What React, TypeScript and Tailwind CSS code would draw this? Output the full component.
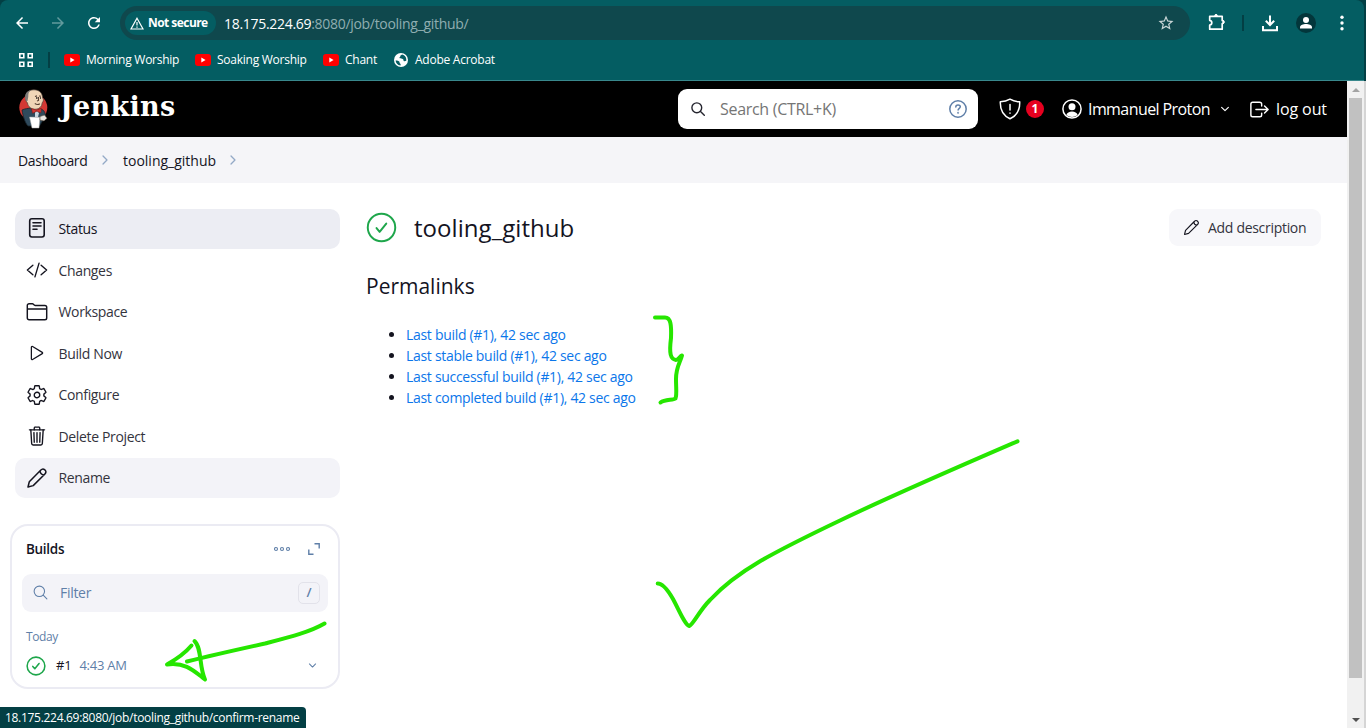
import React from "react";
import {
  IoCodeSlashOutline,
  IoSettingsOutline,
  IoTrashOutline,
  IoPlayOutline,
  IoLogOutOutline,
  IoSearchOutline,
  IoChevronDown,
  IoChevronForward,
} from "react-icons/io5";
import { MdArrowBack, MdArrowForward, MdRefresh, MdStarOutline } from "react-icons/md";

function YouTube() {
  return (
    <svg width="16" height="12" viewBox="0 0 16 12" className="shrink-0">
      <rect width="16" height="12" rx="3" fill="#f00" />
      <path d="M6.300 3.600v4.800L10.600 6z" fill="#fff" />
    </svg>
  );
}

function Globe() {
  return (
    <svg width="14" height="14" viewBox="0 0 14 14" className="shrink-0">
      <circle cx="7" cy="7" r="7" fill="#fff" />
      <path d="M1.600 7.400c2 .2 2.500 0 3.600 1.100.9.9-.2 1.400.9 2 .8.500.6 1.600.4 2.100C3.600 12 1.700 10 1.600 7.400zM8 1.600c-.7.7-1.800.8-1.700 1.700.1 1-1.300.9-.8 1.700.8 1 2.600.2 3.600 1.300.9 1-.1 1.700 1.100 1.900.8.1 1.300-.5 2.100-.5C12.600 4.200 10.700 2.100 8 1.600z" fill="#045d62" />
    </svg>
  );
}

function Butler() {
  return (
    <svg width="30" height="40" viewBox="0 0 30 40" className="shrink-0">
      <ellipse cx="14.300" cy="18.500" rx="14" ry="13.500" fill="#d33833" />
      <path d="M3 21c3-1.500 6-1.500 8.500-2l4 4 6-3c3 .5 5 3 5 8l-3 4-3 5H9c-3-3-5-10-6-16z" fill="#2f4a5c" stroke="#17232b" strokeWidth=".8" />
      <path d="M7 12C5 5 9 .7 15 .8c6 0 8.500 4 8.600 8 1.500 2 .5 4-.4 5-.2 4-3.200 6.200-6.200 6.400C12 20.500 9 17.500 8.500 14z" fill="#f0d6b7" stroke="#4c4038" strokeWidth=".7" />
      <path d="M7 12C4.600 5.500 8 1.500 12 1.200 9 3 9.500 5.500 9.300 7.500L8.500 12z" fill="#7d7a78" />
      <path d="M16 7.500l2-.6M20 7l2 .2M19.500 8v3.500l-1.500.6M15.800 14.500c2 1.300 3.700 1.100 5 .2" stroke="#5a4335" strokeWidth="1.100" fill="none" />
      <path d="M17 9h1.500M21 9h1" stroke="#222" strokeWidth="1.300" />
      <path d="M12.500 19.500l5 1.800 4.700-2-.2 4.400-4.500-1.200-4 1.800z" fill="#d33833" stroke="#7b1714" strokeWidth=".5" />
      <path d="M16 23.500l2-1 2 1.500-1 4h-3z" fill="#c9d6e0" />
      <path d="M10.500 28l10.500.3-1 10.700h-7z" fill="#fff" stroke="#aaa" strokeWidth=".5" />
      <path d="M21 27.500l4.500-1.500 2.500 3.300-3 2.600-4-.8z" fill="#e9e6e2" stroke="#60503f" strokeWidth=".6" />
    </svg>
  );
}

function StatusIcon() {
  return (
    <svg width="22" height="22" viewBox="0 0 22 22" fill="none" stroke="currentColor" strokeWidth="1.600" strokeLinecap="round" className="-mt-[2px] shrink-0">
      <rect x="3.700" y="1.800" width="14.500" height="18.200" rx="2.200" />
      <path d="M7 5.800h8M7 9h8M7 12.200h4" />
    </svg>
  );
}

function FolderIcon() {
  return (
    <svg width="22" height="22" viewBox="0 0 22 22" fill="none" stroke="currentColor" strokeWidth="1.450" strokeLinejoin="round" className="shrink-0">
      <path d="M1.300 8V4.600c0-1 .8-1.800 1.800-1.800h3.400c.9 0 1.400 1.600 2.600 1.600h9.800c1 0 1.800.8 1.800 1.800V17c0 1-.8 1.800-1.800 1.800H3.100c-1 0-1.800-.8-1.800-1.800V8h19.400" />
    </svg>
  );
}

function Pencil({ size }: { size: number }) {
  return (
    <svg width={size} height={size} viewBox="0 0 22 22" fill="none" stroke="currentColor" strokeWidth="1.500" strokeLinejoin="round" className="shrink-0">
      <path d="M2 20l1.300-5.300L14.600 3.200c1.200-1.200 2.700-1.700 3.900-.6l.7.700c1.200 1.200.7 2.700-.5 3.900L7.200 18.600zM14 3.800c.2 2.200 2 4.100 4.200 4.200" />
    </svg>
  );
}

function CheckCircle({ size, stroke }: { size: number; stroke: number }) {
  return (
    <svg width={size} height={size} viewBox="0 0 30 30" fill="none" stroke="#1ea64b" strokeWidth={stroke} strokeLinecap="round" strokeLinejoin="round" className="shrink-0">
      <circle cx="15" cy="15" r="13.300" />
      <path d="M10.200 15.600l3 3.600 6.400-8" />
    </svg>
  );
}

function BrowserChrome() {
  return (
    <header className="relative h-[81px] w-[1364px] rounded-t-lg border-b border-[#39888c] bg-[#045d62] font-['Open_Sans',sans-serif] text-white">
      <div className="flex h-[46px] items-center">
        <div className="flex w-[120px] shrink-0 items-center pl-[13px]">
          <MdArrowBack className="size-[18px]" />
          <MdArrowForward className="ml-[18px] size-[18px] text-[#629a9d]" />
          <MdRefresh className="ml-[18px] size-[18px]" />
        </div>
        <div className="flex h-[34px] w-[1070px] shrink-0 items-center rounded-full bg-[#0f484d] pr-[15px] pl-[5px]">
          <div className="flex h-6 w-[91px] items-center rounded-full bg-[#045d62] pl-[5px]">
            <svg width="14" height="13" viewBox="0 0 14 13" fill="none" stroke="#fff" strokeWidth="1.200" className="mr-[4px] shrink-0">
              <path d="M7 1.300L13 12H1zM7 5v3.500M7 9.500v1.200" />
            </svg>
            <span className="text-[12px] font-bold tracking-[-0.55px] whitespace-nowrap">Not secure</span>
          </div>
          <span className="ml-[8px] text-[14px] tracking-[-0.3px] whitespace-nowrap">
            18.175.224.69<span className="text-[#8faeb1]">:8080/job/tooling_github/</span>
          </span>
          <MdStarOutline className="ml-auto size-[18px] text-[#c9d6d7]" />
        </div>
        <svg width="20" height="20" viewBox="0 0 20 20" fill="none" stroke="#fff" strokeWidth="1.700" strokeLinejoin="round" className="-mt-[2px] ml-[17px] shrink-0">
          <path d="M2.700 4.300h12.500v4.200c2 0 2 3.200 0 3.200v5.500H2.700v-4c2.800-.6 2.800-4.200 0-4.800z" />
          <path d="M7.700 3.600c0-1.600 2.700-1.600 2.700 0zM16 8.700c1.600 0 1.600 2.700 0 2.700z" fill="#fff" strokeWidth="1" />
        </svg>
        <div className="ml-[15px] h-4 w-[2px] bg-[#033f44]" />
        <svg width="18" height="18" viewBox="0 0 18 18" fill="none" stroke="#fff" strokeWidth="2" className="ml-[17px] shrink-0">
          <path d="M9 1.500v9M4.800 6.800L9 11l4.200-4.200M2 12v4.200h14V12" />
        </svg>
        <svg width="20" height="20" viewBox="0 0 20 20" className="ml-[17px] shrink-0">
          <circle cx="10" cy="10" r="10" fill="#03363b" />
          <circle cx="10" cy="7" r="3" fill="#fff" />
          <path d="M4 15.600v-1.400c0-2 3.400-3.100 6-3.100s6 1.100 6 3.100v1.400z" fill="#fff" />
        </svg>
        <svg width="4" height="16" viewBox="0 0 4 16" fill="#fff" className="ml-[24px] shrink-0">
          <circle cx="2" cy="2.300" r="1.700" />
          <circle cx="2" cy="8" r="1.700" />
          <circle cx="2" cy="13.700" r="1.700" />
        </svg>
      </div>
      <nav className="flex h-[28px] items-center text-[12px] tracking-[-0.25px] whitespace-nowrap">
        <svg width="14" height="14" viewBox="0 0 14 14" fill="none" stroke="#fff" strokeWidth="1.600" className="ml-[19px] shrink-0">
          <path d="M.8.8h4v4h-4zM9.200.8h4v4h-4zM.8 9.200h4v4h-4zM9.200 9.200h4v4h-4z" />
        </svg>
        <div className="ml-[15px] h-4 w-[2px] bg-[#033f44]" />
        <div className="ml-[14px] flex w-[131px] items-center gap-[6px]"><YouTube />Morning Worship</div>
        <div className="flex w-[128px] items-center gap-[6px]"><YouTube />Soaking Worship</div>
        <div className="flex w-[71px] items-center gap-[6px]"><YouTube />Chant</div>
        <div className="flex items-center gap-[7px]"><Globe />Adobe Acrobat</div>
      </nav>
    </header>
  );
}

function JenkinsHeader() {
  return (
    <div className="flex h-14 items-center bg-black text-white">
      <div className="flex w-[678px] items-center pl-[19px]">
        <Butler />
        <span className="-mt-[4px] ml-[11px] font-['DejaVu_Serif',serif] text-[27px] leading-[30px] font-bold tracking-[0.3px]">Jenkins</span>
      </div>
      <div className="flex h-10 w-[300px] shrink-0 items-center rounded-[9px] bg-white pr-[11px] pl-[13px]">
        <svg width="14" height="14" viewBox="0 0 14 14" fill="none" stroke="#25252f" strokeWidth="1.400" strokeLinecap="round">
          <circle cx="5.800" cy="5.800" r="4.900" />
          <path d="M9.500 9.500l3.800 3.800" />
        </svg>
        <span className="ml-[15px] text-[16px] tracking-[-0.3px] text-[#757575]">Search (CTRL+K)</span>
        <svg width="18" height="18" viewBox="0 0 18 18" fill="none" stroke="#5f7fa8" strokeWidth="1.500" strokeLinecap="round" className="ml-auto">
          <circle cx="9" cy="9" r="8.200" />
          <path d="M6.800 7c0-2.900 4.500-2.700 4.500-.2 0 1.500-2.200 1.600-2.200 3.300" />
          <circle cx="9.100" cy="12.700" r=".3" />
        </svg>
      </div>
      <svg width="22" height="22" viewBox="0 0 22 22" fill="none" stroke="#fff" strokeWidth="1.500" strokeLinecap="round" strokeLinejoin="round" className="ml-[21px] shrink-0">
        <path d="M11 1.200C8 3 4.500 3.700 1.300 3.800 1 12 3.700 17.500 11 20.800c7.300-3.300 10-8.800 9.700-17C17.500 3.700 14 3 11 1.200zM11 6.500v5.500M11 15v.2" />
      </svg>
      <span className="ml-[5px] flex size-[18px] shrink-0 items-center justify-center rounded-full bg-[#e6001f] text-[12px] font-bold">1</span>
      <svg width="20" height="20" viewBox="0 0 20 20" fill="none" className="ml-[18px] shrink-0">
        <circle cx="10" cy="10" r="9.100" stroke="#fff" strokeWidth="1.500" />
        <circle cx="10" cy="7.800" r="3.500" fill="#fff" />
        <path d="M4.300 16c1-4.700 10.400-4.700 11.400 0A9 9 0 0 1 4.300 16z" fill="#fff" />
      </svg>
      <span className="ml-[6px] w-[123px] text-[16px] tracking-[-0.58px] whitespace-nowrap">Immanuel Proton</span>
      <IoChevronDown className="ml-[8px] size-3 shrink-0" />
      <IoLogOutOutline className="ml-[17px] size-[23px] shrink-0" />
      <span className="ml-[5px] text-[16px] tracking-[-0.1px] whitespace-nowrap">log out</span>
    </div>
  );
}

const icon = "size-[22px] shrink-0";

const tasks = [
  { label: "Status", icon: <StatusIcon />, row: "bg-[#ecedf3]", text: "font-medium text-[#14141f]" },
  { label: "Changes", icon: <IoCodeSlashOutline className={icon} />, row: "", text: "text-[#33333d]" },
  { label: "Workspace", icon: <FolderIcon />, row: "", text: "text-[#33333d]" },
  { label: "Build Now", icon: <IoPlayOutline className="mx-px size-[20px] shrink-0" />, row: "", text: "text-[#33333d]" },
  { label: "Configure", icon: <IoSettingsOutline className={icon} />, row: "", text: "text-[#33333d]" },
  { label: "Delete Project", icon: <IoTrashOutline className={icon} />, row: "", text: "text-[#33333d]" },
  { label: "Rename", icon: <Pencil size={22} />, row: "bg-[#f3f3f8]", text: "text-[#33333d]" },
];

function Sidebar() {
  return (
    <aside className="w-[340px] shrink-0 pl-[10px]">
      <div className="ml-[5px] flex flex-col gap-[2px]">
        {tasks.map((t) => (
          <div key={t.label} className={`flex h-[39.5px] items-center gap-[10.5px] rounded-[10px] pl-[11px] text-[14px] tracking-[-0.35px] ${t.row}`}>
            {t.icon}
            <span className={t.text}>{t.label}</span>
          </div>
        ))}
      </div>
      <section className="mt-[26px] h-[165px] rounded-[18px] border-2 border-[#ebebf3] px-[10px] text-[#5f7fa8]">
        <div className="flex h-[47px] items-center pr-[8px] pl-1">
          <span className="text-[13.5px] font-semibold tracking-[-0.3px] text-[#14141f]">Builds</span>
          <svg width="16" height="6" viewBox="0 0 16 6" fill="none" stroke="currentColor" strokeWidth="1.100" className="ml-auto">
            <circle cx="2" cy="3" r="1.500" />
            <circle cx="8" cy="3" r="1.500" />
            <circle cx="14" cy="3" r="1.500" />
          </svg>
          <svg width="12" height="12" viewBox="0 0 12 12" fill="none" stroke="currentColor" strokeWidth="1.400" className="ml-[18px]">
            <path d="M6.500.8h4.700v4.700M.8 6.500v4.700h4.700" />
          </svg>
        </div>
        <div className="mt-px flex h-[38px] items-center rounded-[9px] bg-[#f3f3f8] pr-[8px] pl-[10px]">
          <IoSearchOutline className="size-[17px]" />
          <span className="ml-[11px] text-[14px] tracking-[-0.3px]">Filter</span>
          <span className="ml-auto flex size-[22px] items-center justify-center rounded-[5px] border border-[#e2e2ea] text-[13px] font-semibold">/</span>
        </div>
        <div className="mt-[15px] pl-1 text-[12px] leading-5 tracking-[-0.4px]">Today</div>
        <div className="flex h-[38px] items-center pr-[10px] pl-1">
          <CheckCircle size={20} stroke={2.3} />
          <span className="ml-[10px] text-[13px] tracking-[-0.2px] text-[#14141f]">#1</span>
          <span className="ml-[8px] text-[13px] tracking-[-0.25px]">4:43 AM</span>
          <IoChevronDown className="ml-auto size-[11px]" />
        </div>
      </section>
    </aside>
  );
}

const permalinks = [
  "Last build (#1), 42 sec ago",
  "Last stable build (#1), 42 sec ago",
  "Last successful build (#1), 42 sec ago",
  "Last completed build (#1), 42 sec ago",
];

function Annotations() {
  return (
    <svg width="1347" height="728" viewBox="0 0 1347 728" fill="none" stroke="#26e600" strokeWidth="4" strokeLinecap="round" strokeLinejoin="round" className="pointer-events-none absolute top-0 left-0">
      <path d="M324.500 623.500C310 632 290 637 265 643.500C240 649 209 656 187 661.500" />
      <path d="M191.500 645.500C186 652 175 660 167 664.500C186 662 194 671 205 679.500C199 667 202 648 194.500 641" />
      <path d="M655 317.500H665C671 317.500 671.500 326 671 338C669 354 670.500 359 676 360C678.500 360 680 356 682 355.500C680 363 676 367 676 379C676 388 677 395 675.500 398.500C673 400.500 665 399 660.500 402.500" />
      <path d="M657.700 583.500C663 583.500 669 592 673 599C679 610 685 625 689.300 626C693 625 699 611 710 600C737 571 772 553 840 520.500C893 495 958 467 1017.500 441.300" />
    </svg>
  );
}

export default function App() {
  return (
    <div className="relative h-[728px] w-[1366px] overflow-hidden bg-[#033f44]">
      <div className="flex h-full w-full flex-col">
        <BrowserChrome />
        <div className="flex min-h-0 flex-1 bg-white font-['Open_Sans',sans-serif] text-[#14141f]">
          <div className="w-[1347px] shrink-0">
            <JenkinsHeader />
            <div className="flex h-[46px] items-center bg-[#f5f5f8] pl-[18px] text-[14px] font-medium">
              <span className="w-[80px] tracking-[-0.3px]">Dashboard</span>
              <IoChevronForward className="size-[14px] text-[#93a9c6]" />
              <span className="ml-[11px] w-[103px] tracking-[0px]">tooling_github</span>
              <IoChevronForward className="size-[14px] text-[#93a9c6]" />
            </div>
            <div className="flex pt-[26px]">
              <Sidebar />
              <main className="flex-1 pr-[26px] pl-[26px]">
                <div className="flex h-[37px] items-center">
                  <CheckCircle size={31} stroke={1.9} />
                  <h1 className="mt-px ml-[17px] text-[24px] font-medium tracking-[0.05px]">tooling_github</h1>
                  <button className="ml-auto flex h-[37px] w-[152px] items-center rounded-[9px] bg-[#f7f7fa] pl-[14px] text-[14px] tracking-[-0.3px] whitespace-nowrap">
                    <Pencil size={17} />
                    <span className="ml-[8px] text-[#33333d]">Add description</span>
                  </button>
                </div>
                <h2 className="mt-[25px] text-[21px] leading-[30px] font-medium tracking-[0px]">Permalinks</h2>
                <ul className="mt-[23px] list-disc pl-10 text-[14px] leading-[21px] tracking-[-0.3px]">
                  {permalinks.map((p) => (
                    <li key={p}><a className="text-[#0b76ea]">{p}</a></li>
                  ))}
                </ul>
              </main>
            </div>
          </div>
          <div className="flex w-[17px] shrink-0 flex-col items-center bg-[#f1f1f1]">
            <div className="flex h-[17px] items-center">
              <svg width="8" height="4" viewBox="0 0 8 4"><path d="M0 4l4-4 4 4z" fill="#a3a3a3" /></svg>
            </div>
            <div className="h-[580px] w-[13px] bg-[#c1c1c1]" />
            <div className="mt-auto flex h-[17px] items-center">
              <svg width="8" height="4" viewBox="0 0 8 4"><path d="M0 0h8L4 4z" fill="#505050" /></svg>
            </div>
          </div>
          <div className="w-[2px] bg-[#d5d5d5]" />
        </div>
      </div>
      <Annotations />
      <div className="absolute bottom-0 left-0 flex h-[21px] w-[306px] items-center rounded-tr-[4px] bg-[#033f44] pl-[5px] font-['Open_Sans',sans-serif] text-[12px] tracking-[-0.3px] whitespace-nowrap text-white">
        18.175.224.69:8080/job/tooling_github/confirm-rename
      </div>
    </div>
  );
}
